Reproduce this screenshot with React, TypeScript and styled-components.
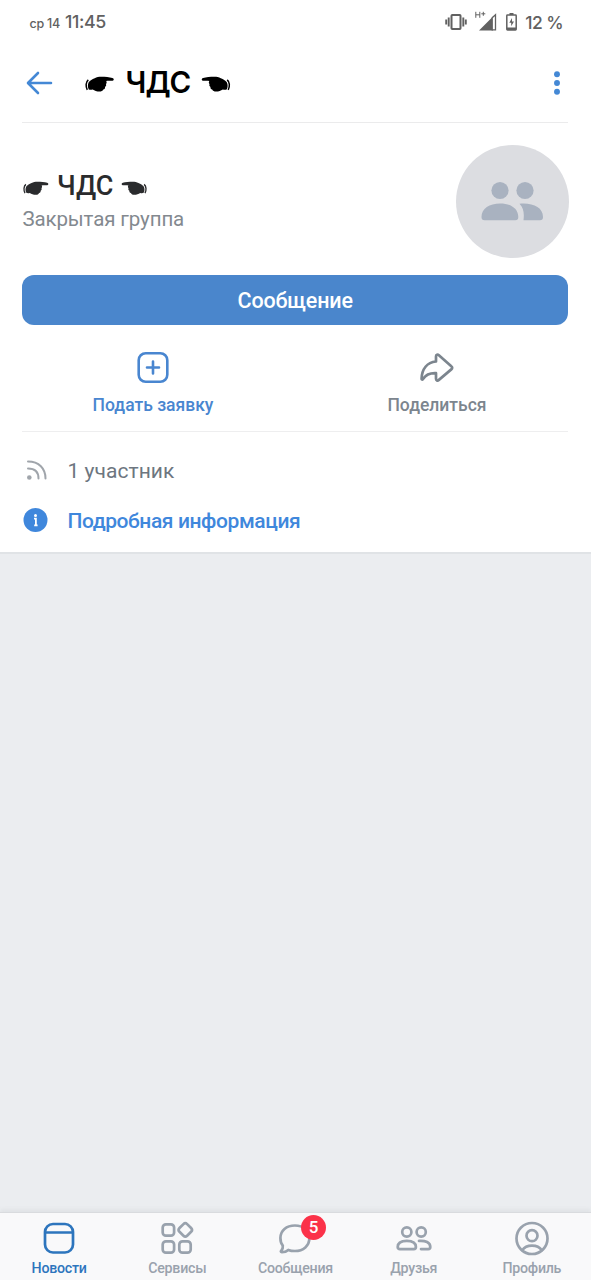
import React from "react";
import styled, { createGlobalStyle } from "styled-components";

const GlobalStyle = createGlobalStyle`
  * { box-sizing: border-box; }
  html, body { margin: 0; padding: 0; background: #ebedf0; }
  body { font-family: Roboto, "Noto Sans", sans-serif; }
  button { font: inherit; border: 0; padding: 0; background: none; }
`;

const Screen = styled.main`
  width: 591px;
  height: 1280px;
  display: flex;
  flex-direction: column;
  background: #ebedf0;
  overflow: hidden;
`;

const Panel = styled.section`
  background: #fff;
  height: 554px;
  padding: 0 23px 0 22.4px;
  border-bottom: 2px solid #e0e3e6;
  flex: none;
`;

const StatusBar = styled.div`
  height: 44px;
  display: flex;
  align-items: center;
  justify-content: space-between;
  padding: 0 5px 0 7px;
  color: #616161;
  font-family: Inter, sans-serif;
`;

const Clock = styled.div`
  display: flex;
  align-items: baseline;
  gap: 5px;
  font-size: 17.8px;
  line-height: 44px;
  padding-top: 2px;
  font-weight: 500;
  letter-spacing: -0.4px;
  white-space: nowrap;
`;

const Day = styled.span`
  font-size: 12.5px;
  letter-spacing: -0.2px;
`;

const Battery = styled.span`
  font-size: 17.5px;
  font-weight: 500;
  letter-spacing: -0.6px;
`;

const StatusIcons = styled.div`
  display: flex;
  align-items: center;
  gap: 8px;
  white-space: nowrap;
`;

const Header = styled.header`
  height: 79px;
  display: flex;
  align-items: center;
  border-bottom: 1px solid #ebebec;
  padding: 0 8px 0 3.6px;
`;

const IconButton = styled.button`
  display: flex;
  color: #4488d5;
`;

const Name = styled.h1<{ $large?: boolean }>`
  margin: 0;
  display: flex;
  align-items: center;
  font-family: ${(p) => (p.$large ? "Inter" : "Roboto")}, sans-serif;
  font-size: ${(p) => (p.$large ? 29.5 : 27)}px;
  line-height: 34px;
  font-weight: ${(p) => (p.$large ? 600 : 500)};
  letter-spacing: ${(p) => (p.$large ? -0.9 : 0)}px;
  color: ${(p) => (p.$large ? "#000" : "#2a2b2d")};
  gap: ${(p) => (p.$large ? 10.5 : 8)}px;
  flex: ${(p) => (p.$large ? 1 : "none")};
  margin-left: ${(p) => (p.$large ? 32.5 : 0.6)}px;
  padding-bottom: ${(p) => (p.$large ? 2 : 0)}px;
`;

const HandIcon = styled.svg<{ $flip?: boolean }>`
  transform: ${(p) => (p.$flip ? "scaleX(-1)" : "none")};
  margin-top: 5px;
`;

const Profile = styled.div`
  height: 152px;
  display: flex;
  justify-content: space-between;
  padding-top: 22px;
`;

const Titles = styled.div`
  padding-top: 24px;
`;

const Subtitle = styled.p`
  margin: 0;
  font-size: 20.5px;
  line-height: 32px;
  letter-spacing: -0.12px;
  color: #83898f;
`;

const Avatar = styled.div`
  width: 113px;
  height: 113px;
  margin-right: -0.6px;
  border-radius: 50%;
  background: #dcdde1;
`;

const MessageButton = styled.button`
  display: block;
  width: 100%;
  height: 50px;
  border-radius: 12px;
  background: #4a86cc;
  color: #fff;
  font-size: 21.5px;
  font-weight: 500;
  letter-spacing: -0.15px;
`;

const Actions = styled.div`
  height: 106px;
  margin: 0 1px 0 -11.4px;
  padding-top: 26px;
  display: grid;
  grid-template-columns: 284px 284px;
`;

const Action = styled.button<{ $muted?: boolean }>`
  height: 69px;
  display: flex;
  flex-direction: column;
  align-items: center;
  color: ${(p) => (p.$muted ? "#7c858e" : "#4986d0")};
  font-size: 17.5px;
  line-height: 21px;
  font-weight: 500;
  gap: 11px;
`;

const Divider = styled.hr`
  border: 0;
  height: 1px;
  margin: 0;
  background: #eeeeef;
`;

const Info = styled.div<{ $link?: boolean }>`
  height: 50px;
  display: flex;
  align-items: center;
  gap: 19px;
  font-size: 21px;
  font-weight: ${(p) => (p.$link ? 500 : 400)};
  color: ${(p) => (p.$link ? "#3f87dc" : "#6d7680")};
  letter-spacing: ${(p) => (p.$link ? -0.4 : 0.05)}px;
`;

const InfoList = styled.div`
  padding-top: 14px;
`;

const InfoGlyph = styled.svg`
  margin-top: -2px;
  flex: none;
`;

const TabBar = styled.nav`
  height: 68px;
  margin-top: auto;
  display: grid;
  grid-template-columns: repeat(5, 118.2px);
  background: #f9f9fa;
  border-top: 1px solid #d9dbde;
  box-shadow: 0 -2px 5px rgba(90, 95, 105, 0.09);
`;

const Tab = styled.div<{ $active?: boolean }>`
  position: relative;
  display: flex;
  flex-direction: column;
  align-items: center;
  padding-top: 7.5px;
  gap: 2.5px;
  color: ${(p) => (p.$active ? "#2d75bd" : "#99a2ad")};
  font-size: 14.2px;
  line-height: 18px;
  font-weight: 500;
  letter-spacing: -0.25px;
`;

const Badge = styled.span`
  position: absolute;
  left: 64.3px;
  top: 1.5px;
  width: 25.5px;
  height: 25.5px;
  border-radius: 50%;
  background: #fb3249;
  color: #fff;
  font-size: 17px;
  line-height: 25px;
  text-align: center;
`;

const Hand = ({ width, flip }: { width: number; flip?: boolean }) => (
  <HandIcon width={width} height={width * 0.55} viewBox="0 0 29 16" $flip={flip}>
    <path
      d="M3.600 6.200C5 4.500 7 3.200 9.500 2.200 11.500 1.200 13.500 .8 16 .8c4 .1 8 .3 11 1.200 1.700 .5 1.800 2.500 .2 2.800-2.400 .1-4.700 0-6.400 .2 .8 1 .6 2.300-.2 3 .6 1.200 .1 2.300-.9 2.800 .2 1.400-.5 2.300-1.700 2.500-.6 1.500-2 2-3.800 2-2.700 0-4.700-.7-6.700-2-1.400 .4-2.800 .4-3.800-.1-1.200-1.700-1.200-5-.1-7z"
      fill="currentColor"
    />
    <path d="M3.200 3.800C.6 5.800 .5 10.500 2.200 13.600" fill="none" stroke="currentColor" strokeWidth="1.500" />
  </HandIcon>
);

const VibrateIcon = () => (
  <svg width="22" height="18" viewBox="0 0 22 18" fill="none" stroke="currentColor" strokeWidth="2">
    <rect x="6.500" y="2" width="9" height="14" rx=".8" />
    <path d="M3.700 4.500v9M18.300 4.500v9M1.200 6.500v5M20.800 6.500v5" strokeWidth="1.900" />
  </svg>
);

const SignalIcon = () => (
  <svg width="23" height="22" viewBox="0 0 23 22">
    <path d="M4 19.500 18 5.500v14z" fill="currentColor" />
    <path d="M17.200 6.800 20.500 3.800v15H17.200z" fill="#fff" stroke="currentColor" strokeWidth="1.300" />
    <path d="M.8 .8v6M4.800 .8v6M.8 3.800h4M6.300 2.800h4M8.300 .8v4" fill="none" stroke="currentColor" strokeWidth="1" />
  </svg>
);

const BatteryIcon = () => (
  <svg width="11" height="20" viewBox="0 0 11 20">
    <path d="M3.500 1h4v2h-4z" fill="currentColor" />
    <rect x=".8" y="3" width="9.400" height="15" rx=".7" fill="none" stroke="currentColor" strokeWidth="1.500" />
    <path d="M1 15.500h9V18H1zM6 6 3.300 10.800h1.900v3.500L8 9.500H6z" fill="currentColor" />
  </svg>
);

const BackIcon = () => (
  <svg width="27" height="24" viewBox="0 0 27 24" fill="none" stroke="currentColor" strokeWidth="2.600" strokeLinecap="round" strokeLinejoin="round">
    <path d="M12 2 2 12l10 10M2.500 12H25" />
  </svg>
);

const MoreIcon = () => (
  <svg width="6" height="24" viewBox="0 0 6 24" fill="currentColor">
    <circle cx="3" cy="3.300" r="2.950" />
    <circle cx="3" cy="12" r="2.950" />
    <circle cx="3" cy="20.700" r="2.950" />
  </svg>
);

const GroupIcon = () => (
  <svg width="113" height="113" viewBox="0 0 113 113" fill="#a9b2c0">
    <circle cx="44" cy="45.500" r="8.600" />
    <circle cx="69" cy="45.500" r="8.600" />
    <path d="M25.500 72c0-8.500 8-13.500 18.500-13.500S62.300 63.500 62.300 72c0 2.200-1 3.200-3 3.200H28.500c-2 0-3-1-3-3.200zM63.500 58.800c13-1.300 23.500 3.500 23.500 13.200 0 2.200-1 3.200-3 3.200H67.500c.9-7.200 0-12.200-4-16.400z" />
  </svg>
);

const RequestIcon = () => (
  <svg width="32" height="33" viewBox="0 0 32 33" fill="none" stroke="currentColor" strokeWidth="2.600" strokeLinecap="round">
    <rect x="1.700" y="2.200" width="28.600" height="28.600" rx="7" />
    <path d="M16 10.500v12M10 16.500h12" />
  </svg>
);

const ShareIcon = () => (
  <svg width="36" height="33" viewBox="0 0 36 33" fill="none" stroke="currentColor" strokeWidth="2.700" strokeLinejoin="round" strokeLinecap="round">
    <path d="M17 10V5c0-1.900 1.600-2.300 2.900-1.200l12.400 10.900c1.200 1 1.200 2.200 0 3.200L19.900 28.400c-1.400 1.200-2.900.6-2.900-1.200v-5.500c-6-.3-10 1.300-13 5.800-.7 1-1.500.7-1.400-.5C2.900 17.500 8 10.800 17 10z" transform="translate(0 .5)" />
  </svg>
);

const FeedIcon = () => (
  <InfoGlyph width="26" height="26" viewBox="0 0 26 26" fill="none" stroke="#a0a5ab" strokeWidth="2">
    <path d="M6 4.500c11 0 17.500 7 17.500 17M6 11.500c7 0 10.500 4 10.500 10" strokeLinecap="round" />
    <circle cx="7.300" cy="20.500" r="2.300" fill="#a0a5ab" stroke="none" />
  </InfoGlyph>
);

const InfoIcon = () => (
  <InfoGlyph width="26" height="26" viewBox="0 0 26 26">
    <circle cx="13.500" cy="13" r="12" fill="#3f87dc" />
    <circle cx="13.500" cy="8.500" r="1.500" fill="#fff" />
    <path d="M12 11.700h1.900v6.700M12.200 18.400h3.400" stroke="#fff" strokeWidth="1.800" fill="none" />
  </InfoGlyph>
);

const tabPaths: Record<string, React.ReactNode> = {
  news: (
    <>
      <rect x="4" y="3" width="28" height="28.500" rx="8" />
      <path d="M4.500 11.500h27" />
    </>
  ),
  services: (
    <>
      <rect x="3.700" y="3.300" width="11.400" height="11.400" rx="3.200" />
      <rect x="3.700" y="20.300" width="11.400" height="11.400" rx="3.200" />
      <rect x="20.300" y="20.300" width="11.400" height="11.400" rx="3.200" />
      <rect x="20.900" y="3.500" width="10.800" height="10.800" rx="2.600" transform="rotate(45 26.300 8.900)" />
    </>
  ),
  messages: <path d="M18.500 4.500c8.600 0 14.500 4.900 14.500 12.600S27 30 18.500 30c-2.400 0-4.600-.3-6.600-1.100-1.800 1.700-4 2.300-6.500 2.300-1 0-1.300-.9-.6-1.600 1.400-1.500 1.900-3 1.600-5C4.500 22.500 4 20 4 17.100 4 9.400 10 4.500 18.500 4.500z" transform="translate(-.6 0)" />,
  friends: (
    <>
      <circle cx="10.800" cy="11" r="4.600" />
      <circle cx="25.200" cy="11" r="4.600" />
      <path d="M1.700 26c0-4.200 3.900-6.200 9.100-6.200s9.100 2 9.100 6.200c0 1.500-.8 2.100-2.100 2.100h-14c-1.300 0-2.100-.6-2.100-2.100zM23 19.900c6.500-.5 11.300 1.600 11.300 6.100 0 1.500-.8 2.100-2.100 2.100h-7.200" />
    </>
  ),
  profile: (
    <>
      <circle cx="18" cy="17.500" r="15.500" />
      <circle cx="18" cy="14.700" r="5.500" />
      <path d="M8.300 29.300c2-3.200 5.500-4.600 9.700-4.600s7.700 1.400 9.700 4.600" />
    </>
  ),
};

const tabs = [
  { id: "news", label: "Новости" },
  { id: "services", label: "Сервисы" },
  { id: "messages", label: "Сообщения", badge: 5 },
  { id: "friends", label: "Друзья" },
  { id: "profile", label: "Профиль" },
];

export default function App() {
  return (
    <Screen>
      <GlobalStyle />
      <Panel>
        <StatusBar>
          <Clock><Day>ср 14</Day>11:45</Clock>
          <StatusIcons>
            <VibrateIcon />
            <SignalIcon />
            <BatteryIcon />
            <Battery>12 %</Battery>
          </StatusIcons>
        </StatusBar>
        <Header>
          <IconButton aria-label="Назад"><BackIcon /></IconButton>
          <Name $large as="h2"><Hand width={29.5} />ЧДС<Hand width={29.5} flip /></Name>
          <IconButton aria-label="Меню"><MoreIcon /></IconButton>
        </Header>
        <Profile>
          <Titles>
            <Name><Hand width={26} />ЧДС<Hand width={26} flip /></Name>
            <Subtitle>Закрытая группа</Subtitle>
          </Titles>
          <Avatar><GroupIcon /></Avatar>
        </Profile>
        <MessageButton>Сообщение</MessageButton>
        <Actions>
          <Action><RequestIcon />Подать заявку</Action>
          <Action $muted><ShareIcon />Поделиться</Action>
        </Actions>
        <Divider />
        <InfoList>
          <Info><FeedIcon />1 участник</Info>
          <Info $link><InfoIcon />Подробная информация</Info>
        </InfoList>
      </Panel>
      <TabBar>
        {tabs.map((tab, i) => (
          <Tab key={tab.id} $active={i === 0}>
            <svg width="36" height="36" viewBox="0 0 36 36" fill="none" stroke="currentColor" strokeWidth="2.700" strokeLinecap="round" strokeLinejoin="round">
              {tabPaths[tab.id]}
            </svg>
            {tab.label}
            {tab.badge && <Badge>{tab.badge}</Badge>}
          </Tab>
        ))}
      </TabBar>
    </Screen>
  );
}
